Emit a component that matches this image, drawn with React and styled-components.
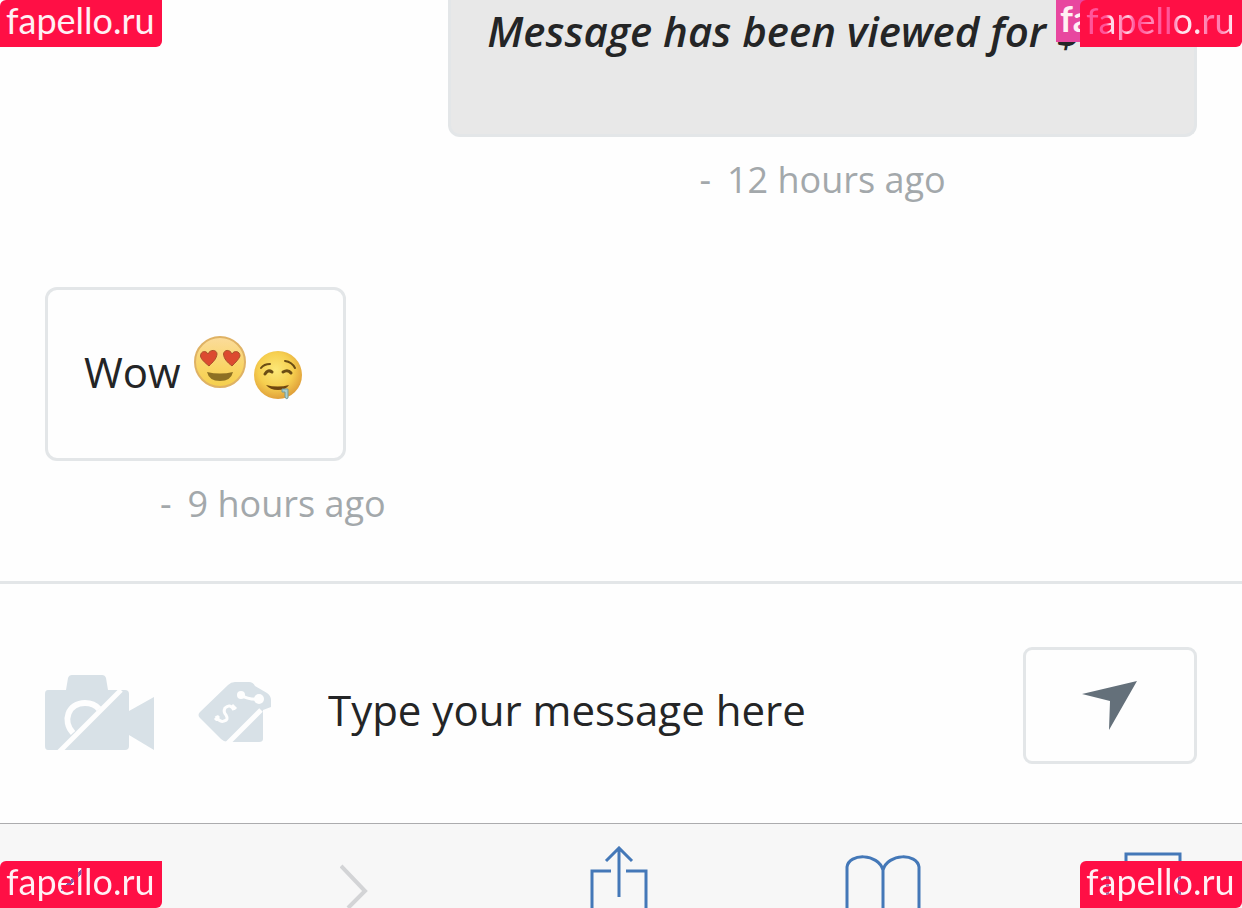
import React from 'react';
import styled, { createGlobalStyle, css } from 'styled-components';

const colors = {
  ink: '#242526',
  muted: '#a3a8ab',
  border: '#e3e6e8',
  bubble: '#e8e8e8',
  icon: '#d8e1e7',
  arrow: '#64707a',
  blue: '#4478b8',
  disabled: '#d3d4d6',
  bar: '#f7f7f7',
  barBorder: '#acacae',
  red: '#ff0f45',
  pink: '#e8479f',
  badgeText: '#fff0f4',
};

const GlobalStyle = createGlobalStyle`
  * {
    box-sizing: border-box;
  }

  body {
    margin: 0;
    background: #fefefe;
    color: ${colors.ink};
    font-family: 'Open Sans', 'Noto Sans', sans-serif;
  }
`;

const Page = styled.div`
  position: relative;
  display: flex;
  flex-direction: column;
  height: 100vh;
  overflow: hidden;
`;

const Thread = styled.main`
  display: flex;
  flex-direction: column;
  padding: 0 45px 51px;
`;

const Message = styled.article`
  display: flex;
  flex-direction: column;
  align-items: flex-start;

  ${({ $sent }) =>
    $sent &&
    css`
      align-self: flex-end;
      align-items: center;
      width: 65%;
      margin-bottom: 81px;
    `}
`;

const Bubble = styled.div`
  display: flex;
  align-items: flex-start;
  border: 3px solid ${colors.border};
  border-radius: 12px;
  padding: 52px 40px 56px 36px;
  font-size: 42px;
  line-height: 60px;
  white-space: pre;

  ${({ $sent }) =>
    $sent &&
    css`
      width: 100%;
      border-top: 0;
      border-radius: 0 0 12px 12px;
      padding: 1px 36px 73px;
      background: ${colors.bubble};
      font-style: italic;
      font-weight: 600;
    `}
`;

const Time = styled.div`
  display: flex;
  gap: 16px;
  margin-top: 17px;
  margin-left: ${({ $indent }) => $indent || 0}px;
  color: ${colors.muted};
  font-size: 36px;
  line-height: 52px;
`;

const Text = styled.span`
  height: 60px;
`;

const Emojis = styled.span`
  display: flex;
  align-items: flex-end;
  gap: 7px;
  height: 60px;
  margin-left: 2px;
`;

const Emoji = styled.svg`
  flex: none;
  width: ${({ $size }) => $size}px;
  height: ${({ $size }) => $size}px;
  margin-bottom: ${({ $raise }) => $raise || 0}px;
`;

const Composer = styled.form`
  display: flex;
  align-items: center;
  border-top: 3px solid ${colors.border};
  padding: 63px 45px 59px;
`;

const IconButton = styled.button`
  display: flex;
  flex: none;
  border: 0;
  padding: 0;
  margin-top: 14px;
  margin-right: 44px;
  background: none;
`;

const MessageInput = styled.input`
  flex: 1;
  min-width: 0;
  height: 60px;
  border: 0;
  padding: 0;
  margin: 8px 24px 0 13px;
  outline: 0;
  background: none;
  color: ${colors.ink};
  font: 42px 'Open Sans', 'Noto Sans', sans-serif;

  &::placeholder {
    color: ${colors.ink};
    opacity: 1;
  }
`;

const SendButton = styled.button`
  display: flex;
  align-items: center;
  justify-content: center;
  flex: none;
  width: 174px;
  height: 117px;
  border: 3px solid ${colors.border};
  border-radius: 9px;
  padding: 0;
  background: #fefefe;
`;

const BrowserBar = styled.nav`
  display: grid;
  grid-template-columns: 280fr 250fr 255fr 279fr 58px;
  flex: 1 0 84px;
  border-top: 1px solid ${colors.barBorder};
  padding: 22px 60px 0;
  background: ${colors.bar};
`;

const BarButton = styled.button`
  display: flex;
  justify-self: start;
  align-self: start;
  border: 0;
  padding: 0;
  background: none;
  color: ${({ disabled }) => (disabled ? colors.disabled : colors.blue)};

  svg {
    fill: none;
    stroke: currentColor;
    stroke-width: ${({ disabled }) => (disabled ? 4 : 3)};
  }
`;

const corners = {
  topLeft: css`
    top: 0;
    left: 0;
  `,
  topRight: css`
    top: 0;
    right: 0;
  `,
  bottomLeft: css`
    bottom: 0;
    left: 0;
  `,
  bottomRight: css`
    bottom: 0;
    right: 0;
  `,
};

const Badge = styled.div`
  position: absolute;
  ${({ $corner }) => corners[$corner]}
  width: 162px;
  height: 47px;
  padding-left: 6px;
  border-radius: 6px 0 6px 0;
  background: ${colors.red};
  color: ${colors.badgeText};
  font-family: Lato, sans-serif;
  font-size: 36px;
  line-height: 40px;
  white-space: nowrap;
  pointer-events: none;
`;

const PinkBadge = styled(Badge)`
  width: 186px;
  height: 42px;
  padding-left: 4px;
  border-radius: 0;
  background: ${colors.pink};
  font-weight: 700;
  line-height: 36px;
`;

const BadgeText = styled.span`
  display: inline-block;
  background: ${({ $fill }) => $fill};
  background-clip: text;
  color: transparent;
`;

const fills = {
  overPink: `linear-gradient(90deg, #ff559a 0 20px, #ffd9e8 24px 30px, #ff7fb0 36px, #ffd9e8 42px,
    #ff559a 48px 54px, #ff8fba 64px, #ff559a 76px 86px, #ffe4ee 94px 112px, #ff7fb0 120px 134px, #ffe4ee 146px)`,
  overChevron: `linear-gradient(135deg, transparent 45%, #8a50a0 45% 55%, transparent 55%) 55px 6px / 26px 24px no-repeat,
    ${colors.badgeText}`,
  overTabs: `linear-gradient(90deg, transparent 20px, #a0609c 20px 23px, transparent 23px 77px, #8a50a0 77px 80px,
    transparent 80px 92px, #8a50a0 92px 95px, transparent 95px), ${colors.badgeText}`,
};

const HeartEyes = () => (
  <Emoji $size={52} $raise={14} viewBox="0 0 52 52" role="img" aria-label="heart eyes">
    <defs>
      <linearGradient id="faceA" x1="0" y1="0" x2="0" y2="1">
        <stop offset="0" stopColor="#fbdc9c" />
        <stop offset="0.6" stopColor="#f9d566" />
        <stop offset="1" stopColor="#f5cf4c" />
      </linearGradient>
    </defs>
    <circle cx="26" cy="26" r="25" fill="url(#faceA)" stroke="#dfb264" strokeWidth="2" />
    <path
      d="M15 30C10 26 7 23 6.500 20C6.500 15 12 14 14 18C16 13 23 13.500 23 18C22.500 23 19 26 15 30Z"
      fill="#dc4a30"
      stroke="#a9502b"
    />
    <path
      d="M38 30C33 26 30 23 29.500 18C30 13.500 36 13 38 18C40 14 46 15 46 20C45 23 42 26 38 30Z"
      fill="#dc4a30"
      stroke="#a9502b"
    />
    <path d="M13 36Q26 39 39 36Q37 45 26 45Q15 45 13 36Z" fill="#8d7023" />
  </Emoji>
);

const Drooling = () => (
  <Emoji $size={50} $raise={2} viewBox="0 0 50 50" role="img" aria-label="drooling">
    <defs>
      <radialGradient id="faceB" cx="0.45" cy="0.4" r="0.6">
        <stop offset="0" stopColor="#fce878" />
        <stop offset="0.6" stopColor="#f6cf4f" />
        <stop offset="1" stopColor="#e0a03a" />
      </radialGradient>
    </defs>
    <circle cx="25" cy="25" r="24" fill="url(#faceB)" />
    <g fill="none" stroke="#6b4d14" strokeWidth="2" strokeLinecap="round">
      <path d="M8 18Q11 14 17 14M32 11Q39 12 42 18" />
      <path d="M12 24Q15 19 19 22M30 22Q35 19 38 23" strokeWidth="3" />
    </g>
    <path d="M13 35Q25 38 36 35Q33 40 25 40Q17 40 13 35Z" fill="#70470f" />
    <path d="M29 39H35V48Q33 50 32 47V42H29Z" fill="#a9cfd0" stroke="#769b95" />
  </Emoji>
);

const CameraIcon = () => (
  <svg width="109" height="76" viewBox="0 0 109 76" aria-hidden="true">
    <path
      d="M3 15H21L23 3Q24 0 27 0H57Q60 0 61 3L63 15H80Q84 15 84 19V36L109 22V75L84 60V71Q84 75 80 75H3Q0 75 0 71V19Q0 15 3 15Z"
      fill={colors.icon}
    />
    <path d="M14 77L76 15" stroke="#fefefe" strokeWidth="5" />
    <path d="M28 58C17 46 23 28 40 28Q49 28 54 34" fill="none" stroke="#fefefe" strokeWidth="6" />
  </svg>
);

const TagIcon = () => (
  <svg width="73" height="61" viewBox="0 0 73 61" aria-hidden="true">
    <path
      d="M30 3Q33 0 37 0H51Q55 0 57 4L69 11Q73 14 73 18V25L65 28V57Q65 60 61 60H30Q26 60 23 57L2 36Q-1 33 2 30Z"
      fill={colors.icon}
    />
    <path d="M29 62L63 28" stroke="#fefefe" strokeWidth="5" />
    <path d="M43 13Q50 18 62 17" fill="none" stroke="#fefefe" strokeWidth="3" />
    <circle cx="43" cy="13" r="4" fill="#fefefe" />
    <circle cx="61" cy="17" r="5" fill="#fefefe" />
    <path
      d="M36 28Q32 21 27 26Q25 30 28 33Q31 38 26 39Q22 41 18 34M34 23L38 27M17 38L21 34"
      fill="none"
      stroke="#fefefe"
      strokeWidth="3"
    />
  </svg>
);

const Watermark = ({ corner, fill }) => (
  <Badge $corner={corner}>{fill ? <BadgeText $fill={fill}>fapello.ru</BadgeText> : 'fapello.ru'}</Badge>
);

const App = () => (
  <Page>
    <GlobalStyle />
    <Thread>
      <Message $sent>
        <Bubble $sent>Message has been viewed for $7.00</Bubble>
        <Time>
          <span>-</span>
          <span>12 hours ago</span>
        </Time>
      </Message>
      <Message>
        <Bubble>
          <Text>Wow </Text>
          <Emojis>
            <HeartEyes />
            <Drooling />
          </Emojis>
        </Bubble>
        <Time $indent={115}>
          <span>-</span>
          <span>9 hours ago</span>
        </Time>
      </Message>
    </Thread>

    <Composer onSubmit={(e) => e.preventDefault()}>
      <IconButton type="button" aria-label="Attach media">
        <CameraIcon />
      </IconButton>
      <IconButton type="button" aria-label="Set price">
        <TagIcon />
      </IconButton>
      <MessageInput type="text" placeholder="Type your message here" aria-label="Message" />
      <SendButton type="submit" aria-label="Send">
        <svg width="56" height="50" viewBox="0 0 56 50" aria-hidden="true">
          <path d="M0 13L55 0L27 49L28 20Z" fill={colors.arrow} />
        </svg>
      </SendButton>
    </Composer>

    <BrowserBar>
      <BarButton type="button" aria-label="Back">
        <svg width="30" height="62" viewBox="0 0 30 62">
          <path d="M27 20L2 45L18 61" />
        </svg>
      </BarButton>
      <BarButton type="button" aria-label="Forward" disabled>
        <svg width="30" height="62" viewBox="0 0 30 62">
          <path d="M1 20L25 45L8 62" />
        </svg>
      </BarButton>
      <BarButton type="button" aria-label="Share">
        <svg width="58" height="62" viewBox="0 0 58 62">
          <path d="M21 25H2V62M36 25H56V62M29 51V2M16 15L29 2L42 15" />
        </svg>
      </BarButton>
      <BarButton type="button" aria-label="Bookmarks">
        <svg width="76" height="62" viewBox="0 0 76 62">
          <path d="M2 62V21C4 7 33 7 38 24C43 7 72 7 74 21V62M38 24V62" />
        </svg>
      </BarButton>
      <BarButton type="button" aria-label="Tabs">
        <svg width="58" height="62" viewBox="0 0 58 62">
          <path d="M2 62V8H56V62" />
        </svg>
      </BarButton>
    </BrowserBar>

    <PinkBadge $corner="topRight">fapello.ru</PinkBadge>
    <Watermark corner="topLeft" />
    <Watermark corner="topRight" fill={fills.overPink} />
    <Watermark corner="bottomLeft" fill={fills.overChevron} />
    <Watermark corner="bottomRight" fill={fills.overTabs} />
  </Page>
);

export default App;
